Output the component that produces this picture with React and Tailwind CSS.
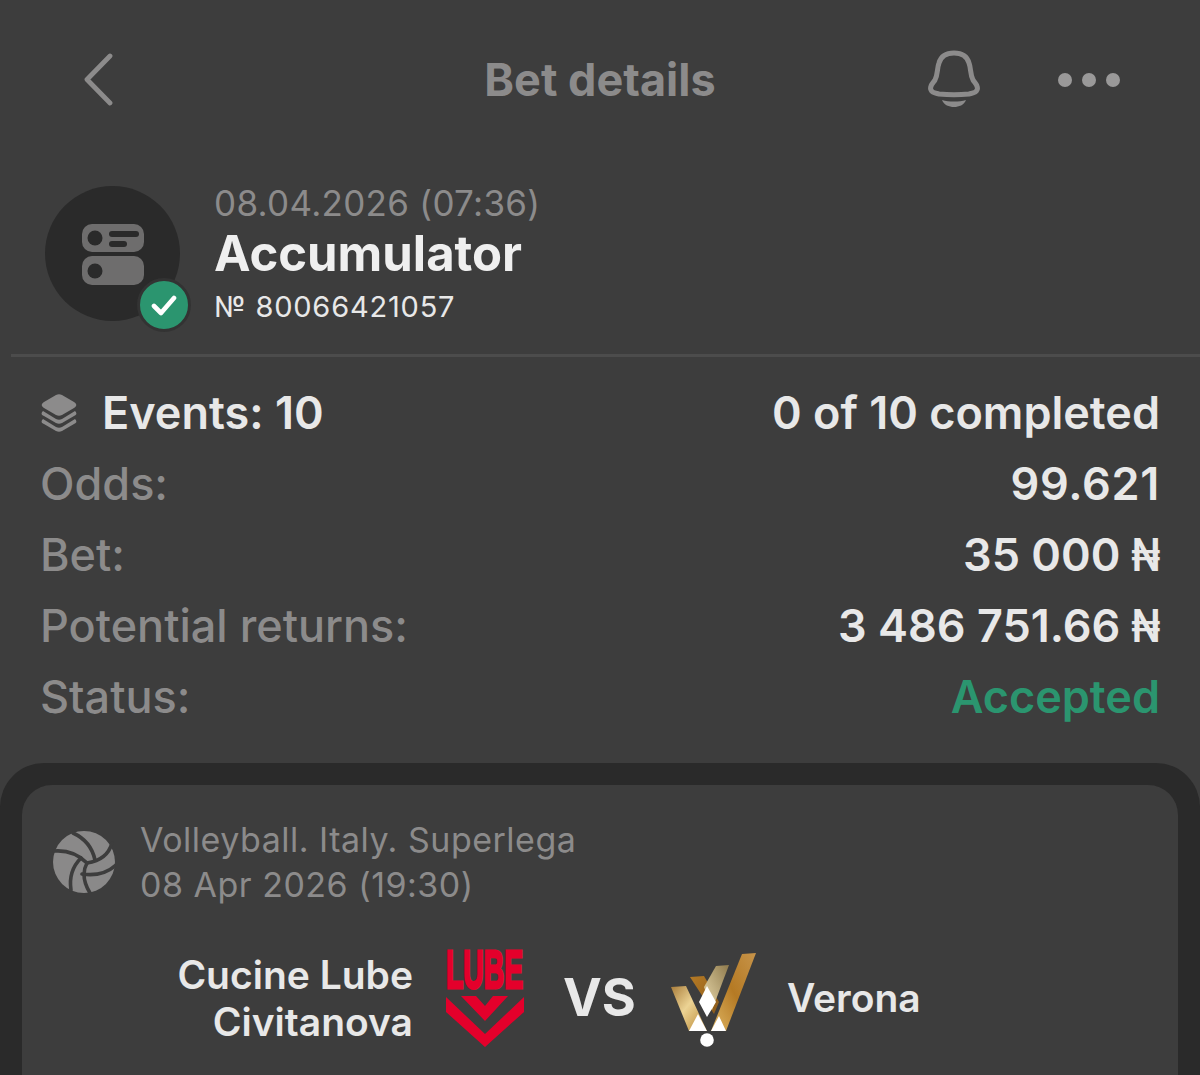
const font = { fontFamily: 'Inter, Roboto, "Liberation Sans", sans-serif' };

function BackIcon() {
  return (
    <svg width="32" height="54" viewBox="0 0 32 54" fill="none">
      <path d="M27 3 L4 26.5 L27 50" stroke="#8c8b8b" strokeWidth="4.8" strokeLinecap="round" strokeLinejoin="round" />
    </svg>
  );
}

function BellIcon() {
  return (
    <svg width="54" height="60" viewBox="0 0 54 60" fill="none">
      <path
        d="M8 30 C11 24 10 18 12 13 C14 6 20 3 27 3 C34 3 40 6 42 13 C44 18 43 24 46 30 C48 33 52 36 50 40 C49 43 46 43 42 44 C32 45 22 45 12 44 C8 43 5 43 4 40 C2 36 6 33 8 30 Z"
        stroke="#8c8b8b"
        strokeWidth="5"
      />
      <path d="M15 50 C22 52 32 52 39 50 C37 55 32 57 27 57 C22 57 17 55 15 50 Z" fill="#8c8b8b" />
    </svg>
  );
}

function BetTypeIcon() {
  return (
    <svg width="64" height="64" viewBox="0 0 64 64">
      <rect x="1" y="2" width="62" height="28" rx="10" fill="#6e6d6d" />
      <rect x="1" y="34" width="62" height="29" rx="10" fill="#6e6d6d" />
      <circle cx="14" cy="16" r="7.5" fill="#2a2a2a" />
      <circle cx="14" cy="49" r="7.5" fill="#2a2a2a" />
      <rect x="28" y="9" width="30" height="6" rx="3" fill="#2a2a2a" />
      <rect x="28" y="19" width="18" height="6" rx="3" fill="#2a2a2a" />
    </svg>
  );
}

function StackIcon() {
  return (
    <svg width="36" height="38" viewBox="0 0 36 38" fill="#8c8b8b">
      <path d="M15 1 C17 0 19 0 21 1 L33 8 C36 10 36 12 33 14 L21 21 C19 22 17 22 15 21 L3 14 C0 12 0 10 3 8 Z" />
      <path d="M2 17 L15 25 C17 26 19 26 21 25 L34 17 C36 19 36 21 33 22 L21 29 C19 30 17 30 15 29 L3 22 C0 21 0 19 2 17 Z" />
      <path d="M2 25 L15 33 C17 34 19 34 21 33 L34 25 C36 27 36 29 33 30 L21 37 C19 38 17 38 15 37 L3 30 C0 29 0 27 2 25 Z" />
    </svg>
  );
}

function VolleyballIcon() {
  return (
    <svg width="64" height="64" viewBox="0 0 64 64" fill="none">
      <circle cx="32" cy="32" r="31" fill="#8a8989" />
      <g stroke="#3d3d3d" strokeWidth="3.6" strokeLinecap="round">
        <path d="M21 3 C32 8 40 16 43 30" />
        <path d="M2 21 C14 20 26 24 35 33" />
        <path d="M60 13 C57 24 48 31 35 33" />
        <path d="M64 35 C54 44 43 46 30 44" />
        <path d="M29 28 C21 36 17 47 19 60" />
        <path d="M35 33 C30 42 32 53 38 63" />
      </g>
    </svg>
  );
}

function LubeLogo() {
  return (
    <svg width="80" height="102" viewBox="0 -2 80 102" className="overflow-visible">
      <text
        transform="translate(1 39) scale(0.535 1)"
        fontFamily="Liberation Sans"
        fontWeight="700"
        fontSize="53"
        fill="#e4002b"
        stroke="#e4002b"
        strokeWidth="3"
      >
        LUBE
      </text>
      <path d="M16 47 H31 L40 57 L48 47 H63 L40 72 Z" fill="#e4002b" />
      <path d="M1 48 L40 85 L79 48 V63 L40 98 L1 63 Z" fill="#e4002b" />
    </svg>
  );
}

function VeronaLogo() {
  return (
    <svg width="88" height="100" viewBox="0 -4 88 100">
      <defs>
        <linearGradient id="goldLeft" x1="0" y1="0" x2="1" y2="1">
          <stop offset="0" stopColor="#a87c3a" />
          <stop offset="0.45" stopColor="#ecd394" />
          <stop offset="1" stopColor="#b5832f" />
        </linearGradient>
        <linearGradient id="goldMid" x1="0" y1="0" x2="1" y2="1">
          <stop offset="0" stopColor="#b57a24" />
          <stop offset="1" stopColor="#8a5a1c" />
        </linearGradient>
        <linearGradient id="goldRight" x1="0" y1="1" x2="1" y2="0">
          <stop offset="0" stopColor="#e0b765" />
          <stop offset="0.5" stopColor="#b57a24" />
          <stop offset="1" stopColor="#c7944a" />
        </linearGradient>
        <linearGradient id="goldPale" x1="1" y1="0" x2="0" y2="1">
          <stop offset="0" stopColor="#8f7a4c" />
          <stop offset="1" stopColor="#ecdcae" />
        </linearGradient>
      </defs>
      <path d="M21 25 L35 24 L50 50 L45 62 Z" fill="url(#goldMid)" />
      <path d="M47 14 L60 13 L43 58 L35 35 Z" fill="url(#goldPale)" />
      <path d="M2 35 L17 34 L38 79 H20 Z" fill="url(#goldLeft)" />
      <path d="M73 2 L87 1 L57 79 H42 Z" fill="url(#goldRight)" />
      <path d="M38 34 L47 50 L38 65 L30 50 Z" fill="#ffffff" />
      <path d="M20 79 L29 62 L38 79 Z" fill="#ffffff" />
      <path d="M42 79 L50 64 L57 79 Z" fill="#ffffff" />
      <circle cx="38" cy="88" r="6.8" fill="#ffffff" />
    </svg>
  );
}

function Naira() {
  return <span className="-ml-[6px] inline-block origin-right scale-x-[0.85]">₦</span>;
}

function Row({ label, children, valueClass = 'text-[#e8e8e8]' }) {
  return (
    <div className="flex h-[71px] items-center justify-between">
      <span className="font-medium text-[#8c8b8b]">{label}</span>
      <span className={valueClass}>{children}</span>
    </div>
  );
}

export default function App() {
  return (
    <div className="h-[1075px] overflow-hidden bg-[#3d3d3d]" style={font}>
      {/* Header */}
      <header className="grid h-[160px] grid-cols-[1fr_auto_1fr] items-center">
        <div className="pl-[83px]">
          <BackIcon />
        </div>
        <h1 className="text-[45px] font-bold text-[#8c8b8b]">Bet details</h1>
        <div className="flex items-center justify-end gap-[77px] pr-[80px]">
          <BellIcon />
          <div className="flex gap-[10px]">
            <span className="h-[14px] w-[14px] rounded-full bg-[#9a9999]" />
            <span className="h-[14px] w-[14px] rounded-full bg-[#9a9999]" />
            <span className="h-[14px] w-[14px] rounded-full bg-[#9a9999]" />
          </div>
        </div>
      </header>

      {/* Bet summary */}
      <section className="ml-[11px] flex h-[197px] gap-[34px] border-b-[3px] border-[#4c4c4c] pl-[34px] pt-[26px]">
        <div className="relative flex h-[135px] w-[135px] items-center justify-center rounded-full bg-[#2a2a2a]">
          <BetTypeIcon />
          <div className="absolute left-[92px] top-[92px] flex h-[54px] w-[54px] items-center justify-center rounded-full border-[3px] border-[#333] bg-[#2b956f]">
            <svg width="26" height="22" viewBox="0 0 26 22" fill="none">
              <path d="M3 12 L10 19 L23 4" stroke="#fff" strokeWidth="4.6" strokeLinecap="round" strokeLinejoin="round" />
            </svg>
          </div>
        </div>
        <div className="-mt-[3px]">
          <div className="text-[35px] leading-[40px] tracking-[0.3px] text-[#8c8b8b]">08.04.2026 (07:36)</div>
          <div className="text-[49px] font-bold leading-[62px] text-[#efefef]">Accumulator</div>
          <div className="text-[29px] leading-[44px] tracking-[0.8px] text-[#e8e8e8]">№ 80066421057</div>
        </div>
      </section>

      {/* Totals */}
      <section className="px-[40px] pt-[20px] text-[45px] font-semibold">
        <div className="flex h-[71px] items-center justify-between text-[#e8e8e8]">
          <div className="flex items-center gap-[25px] pl-[1px]">
            <StackIcon />
            <span>Events: 10</span>
          </div>
          <span>0 of 10 completed</span>
        </div>
        <Row label="Odds:" valueClass="tracking-[0.7px] text-[#e8e8e8]">99.621</Row>
        <Row label="Bet:">35 000 <Naira /></Row>
        <Row label="Potential returns:">3 486 751.66 <Naira /></Row>
        <Row label="Status:" valueClass="text-[#2b956f]">Accepted</Row>
      </section>

      {/* Event card */}
      <section className="mt-[31px] h-[400px] rounded-t-[44px] bg-[#2a2a2a] px-[22px] pt-[22px]">
        <div className="h-full rounded-t-[30px] bg-[#3d3d3d] pl-[30px] pt-[32px]">
          <div className="flex items-center gap-[24px]">
            <VolleyballIcon />
            <div className="text-[34px] leading-[45px] tracking-[0.5px] text-[#8c8b8b]">
              <div>Volleyball. Italy. Superlega</div>
              <div>08 Apr 2026 (19:30)</div>
            </div>
          </div>
          <div className="mt-[40px] flex items-center pl-[123px]">
            <div className="w-[238px] text-right text-[39px] font-semibold leading-[47px] text-[#e8e8e8]">
              Cucine Lube Civitanova
            </div>
            <div className="ml-[32px]">
              <LubeLogo />
            </div>
            <div className="ml-[38px] text-[52px] font-bold text-[#e8e8e8]">VS</div>
            <div className="ml-[33px]">
              <VeronaLogo />
            </div>
            <div className="ml-[30px] text-[39px] font-semibold text-[#e8e8e8]">Verona</div>
          </div>
        </div>
      </section>
    </div>
  );
}
